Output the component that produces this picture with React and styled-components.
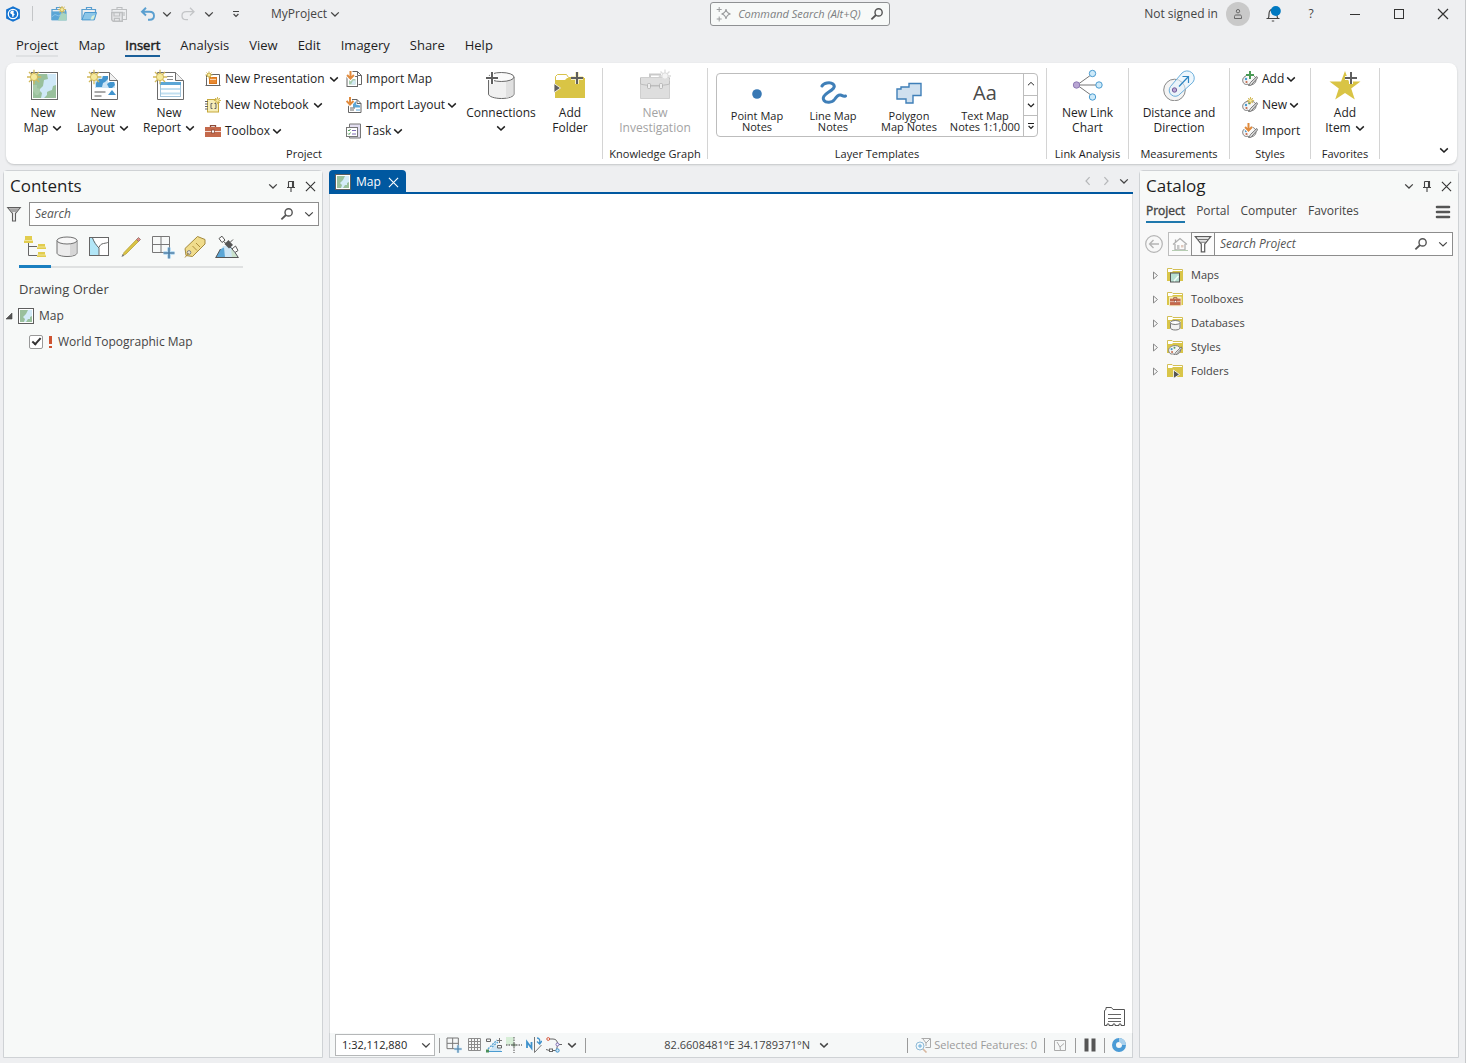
import React from 'react';
import styled, { createGlobalStyle } from 'styled-components';

const GlobalStyle = createGlobalStyle`
  *, *::before, *::after { box-sizing: border-box; }
  body {
    margin: 0;
    background: #eeeff1;
    color: #444;
    font: 12px/16px "Open Sans", "Noto Sans", sans-serif;
  }
  button, input, select { font: inherit; color: inherit; }
  button { background: none; border: 0; padding: 0; cursor: pointer; }
  svg { display: block; flex: none; }
  ul { list-style: none; margin: 0; padding: 0; }
  h2, h3 { margin: 0; font-weight: 400; }
  a { color: inherit; text-decoration: none; }
`;

/* ---------- icons ---------- */

const Glyph = ({ size = 16, box = size, children, ...rest }) => (
  <svg width={size} height={size} viewBox={`0 0 ${box} ${box}`} fill="none" aria-hidden="true" {...rest}>
    {children}
  </svg>
);

const Chevron = ({ size = 10, color = 'currentColor', weight = 1.5, turn = 0 }) => (
  <Glyph size={size} box={10}>
    <path d="M1.2 3.4 5 7 8.8 3.4" stroke={color} strokeWidth={weight} transform={`rotate(${turn} 5 5)`} />
  </Glyph>
);

const BarChevron = ({ size = 10 }) => (
  <Glyph size={size} box={10}>
    <path d="M2 2.5h6M2.6 5 5 7.4 7.4 5" stroke="currentColor" strokeWidth="1.2" />
  </Glyph>
);

const Sun = ({ x, y, r = 3, fill = '#f6ea9c', stroke = '#d2b95a' }) => (
  <g transform={`translate(${x} ${y})`} stroke={stroke}>
    <path
      d={`M0 ${-r * 2}V${r * 2}M${-r * 2} 0H${r * 2}M${-r * 1.4} ${-r * 1.4}L${r * 1.4} ${r * 1.4}M${r * 1.4} ${-r * 1.4}L${-r * 1.4} ${r * 1.4}`}
      strokeWidth={r > 2.5 ? 1.3 : 1}
    />
    <circle r={r} fill={fill} strokeWidth="1" />
  </g>
);

const Plus = ({ x, y, r = 5, color = '#5f5f5f', halo = '#fff', weight = 2 }) => (
  <g>
    <path d={`M${x - r} ${y}h${r * 2}M${x} ${y - r}v${r * 2}`} stroke={halo} strokeWidth={weight + 2} />
    <path d={`M${x - r} ${y}h${r * 2}M${x} ${y - r}v${r * 2}`} stroke={color} strokeWidth={weight} />
  </g>
);

const DownArrow = ({ x, y }) => (
  <g>
    <path d={`M${x} ${y}v7M${x - 3.4} ${y + 4}l3.4 3.6 3.4-3.6`} stroke="#fff" strokeWidth="4" />
    <path d={`M${x} ${y}v7M${x - 3.4} ${y + 4}l3.4 3.6 3.4-3.6`} stroke="#e08a3c" strokeWidth="2" />
  </g>
);

const LogoIcon = () => (
  <Glyph>
    <path d="M8 0.3 14.9 3.6V12.4L8 15.8 1.1 12.4V3.6Z" fill="#1473d0" />
    <circle cx="8" cy="8" r="4.7" stroke="#fff" strokeWidth="1.3" />
    <path d="M8.2 4.4c-2 .2-3.2 1-3 2.8l1.8 1.4.4 2.4c1 .5 1.2-.6 1.3-1.5l1.1-1.2-1.6-1.4.8-1Z" fill="#fff" />
  </Glyph>
);

const CaseIcon = ({ sun }) => (
  <Glyph>
    <path d="M5.500 3.500V1.500h5v2M1 14V3.500h13.500V6" stroke="#5a9fd0" strokeWidth="1.2" />
    {sun ? (
      <>
        <path d="M.6 5.400h15v9H.6Z" fill="#5ba6d6" />
        <path d="M7 14.400 9 9.500l2-3 4.600 1.400v6.500Z" fill="#a9d4c0" />
        <path d="M.6 11 4 8.500l4 1.500 3-3.500" stroke="#8ac3e6" />
        <Sun x={11} y={3.6} r={2} />
      </>
    ) : (
      <>
        <path d="M3.800 6.500h11.700l-2.200 7.400H1Z" fill="#8cc6e8" stroke="#4a99cf" />
        <path d="M9.5 13.4 11 10l3-1-1.6 4.400Z" fill="#d9eed6" />
      </>
    )}
  </Glyph>
);

const SaveIcon = () => (
  <Glyph stroke="#bdbfc1">
    <path d="M6 3.500V1.500h5v2M1 5.500v-2h14.500v10H12" strokeWidth="1.1" />
    <path d="M.7 6.5h10.6v8.8H2.2L.7 13.8Z" fill="#e6e7e9" strokeWidth="1.4" />
    <path d="M3 6.8v3.200h5.600V6.800M3.400 15v-2.600h5V15M13 6v4" strokeWidth="1.200" />
  </Glyph>
);

const UndoIcon = ({ color, flip }) => (
  <Glyph>
    <g transform={flip ? 'matrix(-1 0 0 1 16 0)' : undefined} stroke={color} strokeWidth={flip ? 1.3 : 1.9}>
      <path d="M6 1.8 2 5.7l4 3.8M2.2 5.7h7.3c3 0 4.5 1.6 4.5 4s-1.700 4-4.200 4H8" />
    </g>
  </Glyph>
);

const SparkleIcon = () => (
  <Glyph stroke="#9b9d9f">
    <path d="M10 3.200c.5 3 1.300 4.200 4.500 4.800-3.200.6-4 1.800-4.500 4.800-.5-3-1.300-4.200-4.500-4.800 3.200-.6 4-1.800 4.500-4.800Z" strokeWidth="1.1" />
    <path d="M3.200 1v5M.7 3.500h5M3.200 10.500v5M.7 13h5" />
  </Glyph>
);

const SearchIcon = ({ size = 14 }) => (
  <Glyph size={size} box={14}>
    <circle cx="8.6" cy="5.4" r="3.6" stroke="#555" strokeWidth="1.4" />
    <path d="M6 8 1.4 12.300" stroke="#555" strokeWidth="1.800" />
  </Glyph>
);

const UserIcon = () => (
  <Glyph size={12} box={12}>
    <circle cx="6" cy="3.200" r="1.700" stroke="#666" />
    <path d="M2.500 10.500v-2c0-1 .6-1.500 1.500-1.500h4c.9 0 1.500.5 1.500 1.500v2Z" stroke="#666" />
  </Glyph>
);

const BellIcon = () => (
  <Glyph>
    <path d="M1.500 12.500h13M3.200 12.300c.8-1 .8-2 .8-4.300C4 5 5.300 3.300 8 3.300S12 5 12 8c0 2.300 0 3.300.8 4.300M6.800 15h2.400" stroke="#444" strokeWidth="1.200" />
    <circle cx="10.800" cy="5" r="5" fill="#0079c1" />
  </Glyph>
);

const MinimizeIcon = () => <Glyph size={12} box={12}><path d="M1 6.500h10" stroke="#333" /></Glyph>;
const MaximizeIcon = () => <Glyph size={12} box={12}><rect x="1.500" y="1.500" width="9" height="9" stroke="#333" /></Glyph>;
const CloseIcon = ({ size = 12, color = '#333' }) => (
  <Glyph size={size} box={12}><path d="M1 1 11 11M11 1 1 11" stroke={color} strokeWidth="1.200" /></Glyph>
);
const PinIcon = () => (
  <Glyph size={12} box={12}><path d="M3.500 1.500h5V7M3.500 1.500V7M2 7.500h8M6 7.500V12M7.500 1.500v6" stroke="#444" strokeWidth="1.100" /></Glyph>
);

const MapShapes = () => (
  <>
    <rect x="4.500" y="3.500" width="26" height="27" fill="#fff" stroke="#6a6a6a" />
    <rect x="6" y="5" width="23" height="24" fill="#99c09c" />
    <path d="M20 5h9v11l-3 1-1 4-3 1-2 1v3l-3 3h-3l1-5-3-3 4-4 1-6 4-1Z" fill="#cfe8f7" />
    <path d="M6 16h4v3l3 1v3l-2 3H9l-3-4Z" fill="#a9cbab" />
  </>
);

const NewMapIcon = () => <Glyph size={32}><MapShapes /><Sun x={7} y={8} r={3.6} /></Glyph>;

const PageOutline = () => (
  <>
    <path d="M4.500 3.500h18l8 8v19h-26Z" fill="#fff" stroke="#6a6a6a" />
    <path d="M22.500 3.500v8h8" fill="#f1f1f1" stroke="#6a6a6a" />
  </>
);

const NewLayoutIcon = () => (
  <Glyph size={32}>
    <PageOutline />
    <path d="M8 7h13v6h7v6H8Z" fill="#cbe4f5" />
    <path d="m9 14 3-4h3l1-3h5v3l-3 3-2 1-1 4H9ZM20 15l3-2h4l1 3-3 3h-3Z" fill="#4295cf" />
    <path d="M7.500 23h11M7.500 27h7" stroke="#555" />
    <path d="m25 21 4 5h-8Z" fill="#4295cf" />
    <Sun x={7} y={8} r={3.6} />
  </Glyph>
);

const NewReportIcon = () => (
  <Glyph size={32}>
    <PageOutline />
    <path d="M14 7.500h6M14 10.500h6" stroke="#8a8a8a" />
    <rect x="7.500" y="13.500" width="20" height="14" fill="#fff" stroke="#a3c5dc" />
    <path d="M7 13h21v3H7Z" fill="#5ba6d6" />
    <path d="M8 20h19M8 24.500h19" stroke="#c2dff0" strokeWidth="2" />
    <Sun x={7} y={8} r={3.6} />
  </Glyph>
);

const PresentationIcon = () => (
  <Glyph>
    <path d="M1.500 4v10.500h13v-11H6M.5 14.500h2M13.500 14.500h2" stroke="#666" fill="#fff" />
    <rect x="4.500" y="6.500" width="7" height="6" fill="#e98a32" stroke="#d9771c" />
    <path d="M5 8.500h6" stroke="#f8d3ae" />
    <Sun x={4} y={4} r={1.8} />
  </Glyph>
);

const NotebookIcon = () => (
  <Glyph>
    <rect x="2.500" y="2.500" width="11" height="12.500" fill="#f7eeb6" stroke="#c6a93d" />
    <path d="M0 4.500h3M0 7h3M0 9.500h3M0 12h3" stroke="#666" />
    <path d="M7.500 6.500H6v5h1.500M9.500 6.500H11v5H9.500" stroke="#666" />
    <Sun x={12.500} y={3.500} r={1.8} />
  </Glyph>
);

const ToolboxShapes = () => (
  <>
    <path d="M5.500 4.500V2.600h5v1.900" stroke="#8b4a38" strokeWidth="1.300" />
    <path d="M0 4h16v10H0Z" fill="#c4694b" />
    <path d="M0 8.500h16" stroke="#f5ded6" />
    <rect x="6.500" y="7" width="3" height="3" fill="#fff" stroke="#8b4a38" strokeWidth=".8" />
  </>
);
const ToolboxIcon = () => <Glyph><ToolboxShapes /></Glyph>;

const ImportMapIcon = () => (
  <Glyph>
    <path d="M5.500 3V.5h6l4 4v9h-3" fill="#fff" stroke="#666" />
    <path d="M11.500.5v4h4" stroke="#666" />
    <rect x="1" y="5.500" width="10.500" height="10" fill="#fff" stroke="#666" />
    <path d="M3 8h6.500v5.500H3Z" fill="#a8cdb0" />
    <path d="m5 13.500 2-4h2.500v4Z" fill="#d3e9f5" />
    <DownArrow x={4.5} y={0} />
  </Glyph>
);

const ImportLayoutIcon = () => (
  <Glyph>
    <path d="M2.500 2.500H11l4 4v9H2.500Z" fill="#fff" stroke="#666" />
    <path d="M11 2.500v4h4" stroke="#666" />
    <path d="m7 5.500 3-1v3l4 1v2H7Z" fill="#5ba6d6" />
    <path d="M4 11h5M4 13h4" stroke="#666" />
    <path d="M10 13h4" stroke="#5ba6d6" />
    <DownArrow x={4} y={0} />
  </Glyph>
);

const TaskIcon = () => (
  <Glyph>
    <path d="M3.500 1h11v14h-11Z" fill="#e2def0" stroke="#777" />
    <rect x=".5" y="4.500" width="11" height="9" fill="#fff" stroke="#777" />
    <path d="m2 7 1 1 1.500-2M2 10.500l1 1 1.500-2" stroke="#4e9a55" />
    <path d="M6 7.500h4M6 11h4" stroke="#7d6bb5" />
  </Glyph>
);

const ConnectionsIcon = () => (
  <Glyph size={32}>
    <path d="M3.500 8v17c0 2.500 6 4.500 13 4.500s12.500-2 12.500-4.500V8" fill="#f0f0f0" stroke="#6a6a6a" />
    <path d="M21 11.500c3-.4 6-1.200 7.500-2.200V25.500c-2 2-5 3-7.500 3.300Z" fill="#e0e0e0" />
    <ellipse cx="16.300" cy="8" rx="12.700" ry="4.500" fill="#fafafa" stroke="#6a6a6a" />
    <Plus x={7} y={9} r={6} />
  </Glyph>
);

const AddFolderIcon = () => (
  <Glyph size={32}>
    <path d="M1.500 28V7.500l2-2h9l2 3H30" stroke="#d8c24a" fill="#fff" />
    <path d="M1 29V11h10l2-2h18v20Z" fill="#d9c445" />
    <path d="M0 14.500 6.500 19 0 23.500Z" fill="#5f5f5f" stroke="#fff" strokeWidth=".8" />
    <Plus x={23} y={9} r={6} halo="#f6efc2" />
  </Glyph>
);

const InvestigationIcon = () => (
  <Glyph size={32}>
    <path d="M11 8V5.500h10V8" stroke="#c9c9c9" strokeWidth="2" />
    <path d="M1.500 8.500h29v21h-29Z" fill="#dedede" stroke="#cfcfcf" />
    <path d="M1.500 9v6c5 2 24 2 29 0V9M9 17h14" stroke="#bdbdbd" />
    <rect x="8.500" y="14.500" width="3" height="5" rx="1" fill="#eee" stroke="#b5b5b5" />
    <rect x="20.500" y="14.500" width="3" height="5" rx="1" fill="#eee" stroke="#b5b5b5" />
    <Sun x={26} y={7} r={3.2} fill="#f4f4f4" stroke="#dcdcdc" />
  </Glyph>
);

const PointNoteIcon = () => <Glyph size={28}><circle cx="14" cy="16" r="4.800" fill="#3878b4" /></Glyph>;
const LineNoteIcon = () => (
  <Glyph size={28}>
    <path d="M3 8C4.500 5 11 3.500 14 6c3.500 3-1 6-5 8.500-3.500 2.300-6 5-4 8 2 2.700 8 2.500 10.500-1 1.800-2.800 3.500-5 6-4.500 2 .4 2.500 1.800 5 1" stroke="#3f7fb8" strokeWidth="3" strokeLinecap="round" />
  </Glyph>
);
const PolygonNoteIcon = () => (
  <Glyph size={28}>
    <path d="M14 5.500h12v12h-8v7.500h-7v-4H2v-10h4v-2h8Z" fill="#cfe0ef" stroke="#3f7fb8" strokeWidth="1.400" />
  </Glyph>
);

const LinkChartIcon = () => (
  <Glyph size={32}>
    <path d="M5 16 21 4.500M5 16h22M5 16l16 11.500" stroke="#777" />
    <g stroke="#4a9bd0" fill="#cdeafa">
      <circle cx="20.500" cy="4.500" r="3.200" /><circle cx="27" cy="16" r="3.200" /><circle cx="20.500" cy="28" r="3.200" />
    </g>
    <circle cx="4.500" cy="16" r="3.200" fill="#b9a6d3" stroke="#8e7ab5" />
  </Glyph>
);

const DistanceIcon = () => (
  <Glyph size={32}>
    <circle cx="11.500" cy="21" r="10.800" fill="#f4f4f4" stroke="#8a8a8a" />
    <path d="M7.500 17.500 19 4a7.200 7.200 0 0 1 11 9.200L17 25a5.800 5.800 0 1 1-9.500-7.500Z" fill="#e2f2fb" fillOpacity=".6" stroke="#6aaedb" />
    <path d="M16 17.500 25 8M19.500 7.500h6V14" stroke="#2f86c3" strokeWidth="1.200" />
    <circle cx="11.500" cy="21" r="2.200" fill="#b9a6d3" stroke="#6f5a98" />
  </Glyph>
);

const PaletteShapes = () => (
  <>
    <path d="M8 4C4 4 .7 6.300.7 9.200S3 14 5 13.300c1.500-.5 1.500.8 3 .7 3 0 6-2 6-5S12 4 8 4Z" fill="#f5f5f5" stroke="#777" />
    <circle cx="4" cy="8" r="1.200" fill="#4a9bd0" /><circle cx="7.200" cy="6.300" r="1.100" fill="#5a9b62" /><circle cx="4.500" cy="11" r="1.100" fill="#c4694b" />
    <path d="M14.800 5.500 8.500 11.500c-.5.800-1 2-2 3 1.500.2 3-.3 3.500-1.500l5.500-6Z" fill="#e3e3e3" stroke="#666" strokeWidth=".9" />
  </>
);
const StyleAddIcon = () => <Glyph><PaletteShapes /><Plus x={8} y={4} r={4} color="#4a9a56" /></Glyph>;
const StyleNewIcon = () => <Glyph><PaletteShapes /><Sun x={8.5} y={3.6} r={1.8} /></Glyph>;
const StyleImportIcon = () => <Glyph><PaletteShapes /><DownArrow x={6.5} y={0} /></Glyph>;

const StarIcon = () => (
  <Glyph size={32}>
    <path d="m16 2 3.800 10.500h11.700l-9.300 7 3.600 11L16 24 6.200 30.500 9.800 19.500.5 12.500H12Z" fill="#d9c445" />
    <Plus x={22} y={9} r={6} />
  </Glyph>
);

const FilterIcon = ({ filled = true }) => (
  <Glyph size={filled ? 16 : 18} box={16}>
    <path d={filled ? 'M1.700 1.500h12.600L9.500 7.500V15h-3V7.500Z' : 'M1.200 1.500h13.600L9.500 8v7h-3V8Z'} fill={filled ? '#eee' : '#fff'} stroke="#5e5e5e" strokeWidth="1.100" />
    <path d="M2.800 2.300h10.400L10.300 6H5.700Z" fill={filled ? '#a5a5a5' : '#e2e2e2'} />
    {!filled && <path d="M3 4h10M5 6.500h6" stroke="#777" strokeWidth=".9" />}
  </Glyph>
);

const DrawingOrderIcon = () => (
  <Glyph size={24}>
    <path d="M5.500 8v12.500H14M5.500 11.500H14" stroke="#666" />
    <path d="M2 1h7v3.500l1 1V8H1V5.500l1-1ZM15 9h7v2.500l1 1V14h-9v-1.500l1-1ZM15 17h7v2.500l1 1V22h-9v-1.500l1-1Z" fill="#e2cd4e" />
    <path d="M1 5.500h9M14 12h9M14 20h9" stroke="#f5ecb0" strokeWidth=".8" />
  </Glyph>
);
const CylinderIcon = () => (
  <Glyph size={24}>
    <path d="M2 5.500v12.500c0 2 4.500 3.500 10 3.500S22 20 22 18V5.500" fill="#ececec" stroke="#707070" />
    <path d="M15 9c3-.3 5-1 6.500-2v11c-1 1.500-3.500 2.500-6.500 2.800Z" fill="#d6d6d6" />
    <ellipse cx="12" cy="5.500" rx="10" ry="3.500" fill="#f8f8f8" stroke="#707070" />
  </Glyph>
);
const SelectionIcon = () => (
  <Glyph size={24}>
    <rect x="2.500" y="2.500" width="19" height="18" fill="#fff" stroke="#666" />
    <path d="M3 3h3l3 6 3 4v7H3Z" fill="#b2e6f7" />
    <path d="M5.500 3c1.500 4 3.500 7 6.500 10v7.500M12 12.500c1-2.500 2-3.500 4.500-4s3.500-.5 5-1.500" stroke="#666" />
  </Glyph>
);
const PencilIcon = () => (
  <Glyph size={24}>
    <path d="m4 20.500 1-3L17.500 4.500l2 2L7 19Z" fill="#d9c445" stroke="#b29a30" strokeWidth=".7" />
    <path d="m17.500 4.500 2-2 2 2-2 2Z" fill="#dd8d86" stroke="#8b6d68" strokeWidth=".8" />
    <path d="m2.500 22 1-3 1.800 1.800Z" fill="#777" />
  </Glyph>
);
const SnapGridIcon = ({ size = 24 }) => (
  <Glyph size={size} box={24}>
    <path d="M1.500 1.500h17v16h-17ZM10 1.500v16M1.500 9.500h17" stroke="#777" strokeWidth={size < 20 ? 1.5 : 1} />
    <path d="M12.500 18h11M18 12.500v11" stroke="#bfe0f5" strokeWidth="4" />
    <path d="M12.500 18h11M18 12.500v11" stroke="#4d7ea5" strokeWidth="1.600" />
  </Glyph>
);
const TagIcon = () => (
  <Glyph size={24}>
    <path d="M14.500 1.500 22 4.500V9L9.500 21.500l-6.500-1L2 13.500Z" fill="#f0dc8c" stroke="#a38a3c" />
    <circle cx="6" cy="17.500" r="1.800" fill="#fff" stroke="#777" />
    <path d="m9.500 11 4.500 4.500M13 8l4 4M2 22.500l4-5" stroke="#b08f3b" />
  </Glyph>
);
const SatelliteIcon = () => (
  <Glyph size={24}>
    <path d="M8 11h8l7.500 11.500H.5Z" fill="#cfe6f5" />
    <path d="m5 14.500 4-2 1 10H.8Z" fill="#5ba6d6" /><path d="m16 13 7 9.500h-6Z" fill="#cbe3cc" />
    <path d="M.5 22.500h23M5.500 14 .8 22.500M20 17.500l3.300 5" stroke="#555" />
    <path d="m9.500 9 4.500 4.500 4-3.500-4.500-5Z" fill="#555" />
    <path d="m4 3.500 3-2.300 3 4-3 2.300ZM17 14l3.500-3 2.500 4.500-3 2ZM8.500 6.500l2.500 2M15 12l3 2.500M15.500 7l2.500-2.500" stroke="#555" fill="#fff" />
  </Glyph>
);

const SmallMapIcon = () => (
  <Glyph>
    <rect x=".5" y=".5" width="15" height="15" fill="#fff" stroke="#5e5e5e" />
    <rect x="2" y="2" width="12" height="12" fill="#99c09c" />
    <path d="M10 2h4v6l-2 1v2h-2l-2 3H6l1-3-2-2 3-3Z" fill="#d3ebf8" />
  </Glyph>
);

const FolderIcon = ({ kind }) => (
  <Glyph>
    <path d="M.5 5V1.500h4.500L6 2.500h9.500V5" stroke="#d3bf55" fill="#fff" />
    <path d="M0 5h5l1-1h10v10H0Z" fill="#d9c549" />
    {kind === 'map' && <><rect x="3.500" y="6" width="9" height="9" fill="#b8e0d2" stroke="#555" /><path d="m7 14 4.500-5" stroke="#f0fbf6" strokeWidth="1.500" /></>}
    {kind === 'toolbox' && <g transform="translate(3 5) scale(.66)"><rect x="-1.500" y="1" width="19" height="14.500" fill="#f6eec0" /><ToolboxShapes /></g>}
    {kind === 'database' && <><path d="M3 6h10.500v8H3Z" fill="#fff" /><path d="M3.500 7.500v5.500c0 1 2 2 4.700 2s4.800-1 4.800-2V7.500" fill="#f2f2f2" stroke="#777" /><ellipse cx="8.200" cy="7.500" rx="4.800" ry="2" fill="#fff" stroke="#777" /></>}
    {kind === 'style' && <g transform="translate(1 3) scale(.9)"><PaletteShapes /></g>}
    {kind === 'folder' && <path d="m6.500 7 6 4.500-6 4Z" fill="#555" stroke="#fff" strokeWidth=".8" />}
  </Glyph>
);

const MenuIcon = () => <Glyph><path d="M2 3h12M2 8h12M2 13h12" stroke="#555" strokeWidth="2.600" strokeLinecap="round" /></Glyph>;
const BackIcon = () => (
  <Glyph size={18}><circle cx="9" cy="9" r="8.300" stroke="#b4b4b4" strokeWidth="1.200" /><path d="M14 9H5M8.500 5 4.600 9l3.900 4" stroke="#b4b4b4" strokeWidth="1.400" /></Glyph>
);
const HomeIcon = () => (
  <Glyph><path d="M1 8.500 8 2.500l7 6M3 8v6h10V8M3.500 6V3.500" stroke="#b0b0b0" strokeWidth="1.300" /><path d="M5 9h2.500v5H5Z" fill="#c6c6c6" /><path d="M9 9h2.500v2.500H9Z" fill="#dfc9bd" /><path d="M0 14.500h16" stroke="#b6cdb2" /></Glyph>
);
const ExpandIcon = () => <Glyph size={9} box={9}><path d="m2.500 1 4 3.500-4 3.500Z" stroke="#8a8a8a" /></Glyph>;
const CollapseIcon = () => <Glyph size={8} box={8}><path d="M7 1v6H1Z" fill="#555" stroke="#444" strokeWidth=".6" /></Glyph>;

const GridIcon = () => <Glyph><path d="M2.500 1.500h12v12h-12ZM5.500 1.500v12M8.500 1.500v12M11.500 1.500v12M2.500 4.500h12M2.500 7.500h12M2.500 10.500h12" stroke="#8c8c8c" /></Glyph>;
const DynamicIcon = () => (
  <Glyph><path d="M3 13.500 9 8l6 4v2.500H3Z" fill="#cfe6f5" /><path d="M.5 2h4v2.500h-4ZM11.500 8.500h4V11h-4Z" stroke="#666" /><path d="M2 12 11 3M6 10l6-5" stroke="#5ba6d6" strokeDasharray="2 1" strokeWidth="1.400" /><path d="M11 3.500h5M13.500 1v5" stroke="#777" /><path d="M2 14.500h14" stroke="#4a9bd0" /><rect x="0" y="12.500" width="3" height="3" fill="#4a8f5a" /></Glyph>
);
const CrossIcon = () => (
  <Glyph><path d="M0 0h8v8H0Z" fill="#d7eed7" /><path d="M8 0v16M0 8h16" stroke="#777" strokeDasharray="1.500 1" strokeWidth="1.300" /><circle cx="8" cy="8" r="1.800" fill="#6a7a6a" /></Glyph>
);
const NorthIcon = () => (
  <Glyph><path d="M1 11V5l4.500 6V5" stroke="#3f92cc" strokeWidth="1.800" /><path d="M8.500 0v15.500l7-7.500" stroke="#777" /><path d="M11 1c2.500 0 3 2 2.800 5M11 4.500 13.700 7 16 4" stroke="#3f92cc" strokeWidth="1.300" /></Glyph>
);
const RouteIcon = () => (
  <Glyph><path d="M2.500 2H7c3 0 4.500 2 4.500 5S10 13 11 13.500M13 7.500h3M0 12.500l3.500 1h8" stroke="#666" /><circle cx="2.200" cy="2" r="1.400" fill="#fff" stroke="#d4573b" /><circle cx="11.500" cy="7.500" r="1.500" fill="#fff" stroke="#7d6bb5" /><circle cx="11.500" cy="13.500" r="1.700" fill="#cfe6f5" stroke="#3f92cc" /><rect x="3.500" y="12" width="3" height="2.500" fill="#fff" stroke="#666" /></Glyph>
);
const ZoomSelIcon = () => (
  <Glyph><path d="M6.500 1.500h9v9h-5M8 2l3 4 4-4M11 6v3" stroke="#aaa" /><circle cx="5" cy="9" r="4" fill="#f1f8fc" stroke="#8fbad6" /><path d="M3 9h4M5 7v4" stroke="#6aaedb" /><path d="m8 12 3.500 3.500" stroke="#d8b8a0" strokeWidth="1.600" /></Glyph>
);
const ExtentIcon = () => <Glyph size={14}><path d="M1.500 2.500h11v10h-11ZM4 4l3 5L11 5.500M7 9l.5 3.500" stroke="#aaa" /></Glyph>;
const PauseIcon = () => <Glyph size={14}><path d="M1.500.5h4v13h-4ZM8.500.5h4v13h-4Z" fill="#555" /></Glyph>;
const RefreshIcon = () => <Glyph size={14}><circle cx="7" cy="7" r="5" stroke="#4a9bd6" strokeWidth="4" /><path d="M7 2a5 5 0 0 1 5 5" stroke="#a9d0ec" strokeWidth="4" /></Glyph>;
const NotesIcon = () => (
  <Glyph size={22}><path d="M1.500 19.500v-15l1.500-1V1.500h5.500l1.500 2h11.500v16H18v-1.500h-2v1.500h-4v-1.500h-2v1.500H6v-1.500H4v1.500Z" fill="#fff" stroke="#555" /><path d="M5 8.500h13M5 12.500h13M5 15.500h13" stroke="#666" /></Glyph>
);

/* ---------- window frame ---------- */

const Window = styled.div`
  min-height: 100vh;
  display: flex;
  flex-direction: column;
  padding-bottom: 5px;
  border-right: 1px solid #c6c8ca;
`;

const TitleBar = styled.header`
  display: grid;
  grid-template-columns: 21fr 180px 17fr;
  align-items: center;
  height: 27px;
`;

const Cluster = styled.div`
  display: flex;
  align-items: center;
  gap: ${p => p.$gap || 0}px;
  padding: 0 ${p => p.$right || 0}px 0 ${p => p.$left || 0}px;
  justify-content: ${p => (p.$end ? 'flex-end' : 'flex-start')};
`;

const ToolButton = styled.button`
  display: flex;
  align-items: center;
  justify-content: center;
  flex: none;
  gap: 3px;
  width: ${p => (p.$w ? `${p.$w}px` : 'auto')};
  height: ${p => p.$h || 24}px;
  white-space: nowrap;
`;

const Rule = styled.span`
  flex: none;
  width: 1px;
  height: 15px;
  background: ${p => p.$tone || '#9a9a9a'};
`;

const CommandSearch = styled.label`
  display: flex;
  align-items: center;
  gap: 6px;
  height: 24px;
  padding: 0 5px;
  border: 1px solid #8f9193;
  border-radius: 3px;
  background: #f7f9f8;
`;

const BareInput = styled.input`
  flex: 1;
  min-width: 0;
  width: 0;
  padding: 0;
  border: 0;
  outline: 0;
  background: transparent;
  font-size: ${p => p.$size || 12}px;
  font-style: italic;
  &::placeholder { color: ${p => p.$tone || '#555'}; opacity: 1; }
`;

const Avatar = styled.button`
  display: grid;
  place-items: center;
  width: 24px;
  height: 24px;
  margin: 0 7px 0 8px;
  border-radius: 50%;
  background: #c9c9c9;
`;

/* ---------- ribbon ---------- */

const TabStrip = styled.nav`
  display: flex;
  gap: 20px;
  height: 36px;
  padding: 9px 16px 0;
  font-size: 13px;
`;

const RibbonTab = styled.a`
  height: 21px;
  line-height: 19px;
  color: #1e1e1e;
  border-bottom: 2px solid ${p => (p.$active ? '#1a5f99' : p.$soft ? '#dfe1e3' : 'transparent')};
  -webkit-text-stroke: ${p => (p.$active ? '0.5px #1e1e1e' : '0')};
`;

const Ribbon = styled.section`
  display: flex;
  height: 101px;
  margin: 0 8px 0 6px;
  padding: 5px 0;
  border-radius: 8px;
  background: #fff;
  box-shadow: 0 1px 2px #c3c5c7;
  color: #1e1e1e;
`;

const Group = styled.div`
  display: flex;
  flex-direction: column;
  justify-content: space-between;
  align-items: center;
  flex: 0 0 ${p => p.$w}px;
  border-right: 1px solid #d4d4d4;
`;

const GroupLabel = styled.span`
  margin-bottom: -2px;
  font-size: 11px;
  line-height: 14px;
  white-space: nowrap;
`;

const GroupBody = styled.div`
  display: flex;
  align-self: stretch;
  justify-content: ${p => (p.$start ? 'flex-start' : 'center')};
  padding-left: ${p => (p.$start ? 8 : 0)}px;
`;

const BigButton = styled.button`
  display: flex;
  flex-direction: column;
  align-items: center;
  width: ${p => p.$w}px;
  height: 74px;
  padding-top: 1px;
  line-height: 15px;
  color: ${p => (p.disabled ? '#a3a3a3' : 'inherit')};
`;

const BigText = styled.span`
  display: flex;
  align-items: center;
  justify-content: center;
  gap: 4px;
  min-height: 15px;
  white-space: nowrap;
  &:first-of-type { margin-top: 4px; }
`;

const SmallStack = styled.div`
  display: flex;
  flex-direction: column;
  align-items: flex-start;
  width: ${p => p.$w}px;
  padding-left: 1px;
  margin-top: -2px;
`;

const SmallButton = styled.button`
  display: flex;
  align-items: center;
  gap: 4px;
  height: 26px;
  white-space: nowrap;
`;

const SmallChevron = styled.span`
  padding-left: ${p => (p.$wide ? 2 : 0)}px;
  margin-left: -2px;
`;

const Gallery = styled.div`
  display: flex;
  width: 322px;
  height: 64px;
  margin-top: 5px;
  padding-left: 2px;
  border: 1px solid #bdbdbd;
  border-radius: 4px;
`;

const GalleryItem = styled.button`
  display: flex;
  flex-direction: column;
  align-items: center;
  justify-content: flex-end;
  width: 76px;
  padding-bottom: 4px;
  font-size: 11px;
  line-height: 11px;
  white-space: pre;
`;

const GallerySample = styled.span`
  display: grid;
  place-items: center;
  height: 28px;
  margin-bottom: 4px;
  font-size: 20px;
  color: #4a4a4a;
`;

const GalleryScroll = styled.div`
  display: grid;
  grid-template-rows: repeat(3, 1fr);
  width: 14px;
  border-left: 1px solid #bdbdbd;
  button { display: grid; place-items: center; }
  button + button { border-top: 1px solid #bdbdbd; }
`;

const RibbonCollapse = styled.button`
  align-self: flex-end;
  margin-left: auto;
  padding: 4px 8px;
`;

/* ---------- docked panes ---------- */

const Workspace = styled.main`
  flex: 1;
  display: grid;
  grid-template-columns: 320px minmax(0, 1fr) 320px;
  gap: 6px;
  padding: 6px 6px 0 3px;
`;

const Pane = styled.section`
  display: flex;
  flex-direction: column;
  border: 1px solid #cfd2d5;
  border-radius: 4px 4px 0 0;
  background: ${p => p.$tone};
`;

const PaneHeader = styled.div`
  display: flex;
  align-items: center;
  height: 30px;
  padding: 0 2px 0 6px;
  background: #f7f9f8;
  h2 { flex: 1; font-size: 17px; line-height: 24px; color: #1e1e1e; }
`;

const ContentsSearch = styled.div`
  display: flex;
  align-items: center;
  gap: 7px;
  margin-top: 1px;
  padding: 0 3px 0 2px;
`;

const SearchBox = styled.label`
  display: flex;
  align-items: center;
  flex: 1;
  gap: 6px;
  height: 24px;
  padding-left: 5px;
  border: 1px solid #8d8d8d;
  background: #fff;
`;

const ViewTabs = styled.div`
  display: flex;
  align-self: flex-start;
  margin: 9px 0 0 15px;
  border-bottom: 2px solid #dfe1e1;
`;

const ViewTab = styled.button`
  display: flex;
  justify-content: center;
  width: 32px;
  height: 33px;
  margin-bottom: -2px;
  border-bottom: 3px solid ${p => (p.$active ? '#1a7fc0' : 'transparent')};
`;

const OrderHeading = styled.h3`
  margin: 12px 0 5px 15px;
  font-size: 13px;
  line-height: 18px;
`;

const LayerRow = styled.div`
  display: flex;
  align-items: center;
  gap: ${p => p.$gap}px;
  height: 26px;
  padding-left: ${p => p.$indent}px;
`;

const LayerLabel = styled.label`
  display: flex;
  align-items: center;
  gap: 6px;
`;

const LayerCheck = styled.input`
  appearance: none;
  display: grid;
  place-items: center;
  width: 14px;
  height: 14px;
  margin: 0;
  border: 1px solid #999;
  border-radius: 2px;
  background: #fff;
  &:checked::after {
    content: '';
    width: 5px;
    height: 9px;
    margin-bottom: 3px;
    border: solid #333;
    border-width: 0 2px 2px 0;
    transform: rotate(42deg);
  }
`;

const Warning = styled.span`
  display: grid;
  gap: 2px;
  &::before { content: ''; width: 3px; height: 8px; background: #cd5331; }
  &::after { content: ''; width: 3px; height: 2px; background: #cd5331; }
`;

const CatalogTabs = styled.nav`
  display: flex;
  align-items: center;
  gap: 11px;
  padding: 0 7px 0 6px;
  height: 22px;
`;

const CatalogTab = styled.a`
  height: 22px;
  line-height: 19px;
  border-bottom: 2px solid ${p => (p.$active ? '#1f78ad' : 'transparent')};
  -webkit-text-stroke: ${p => (p.$active ? '0.4px #444' : '0')};
`;

const MenuButton = styled.button`
  margin-left: auto;
`;

const CatalogSearch = styled.div`
  display: flex;
  align-items: center;
  gap: 5px;
  margin-top: 9px;
  padding: 0 5px;
`;

const SearchGroup = styled.div`
  display: flex;
  flex: 1;
`;

const BoxButton = styled.button`
  display: grid;
  place-items: center;
  width: 24px;
  height: 24px;
  margin-right: -1px;
  border: 1px solid ${p => (p.$faint ? '#bdbdbd' : '#8d8d8d')};
  background: #fbfbfb;
`;

const Tree = styled.ul`
  padding: 7px 0 0 11px;
  font-size: 11px;
`;

const TreeItem = styled.button`
  display: flex;
  align-items: center;
  gap: 7px;
  height: 24px;
`;

const TreeLabel = styled.span`
  padding-left: 1px;
`;

/* ---------- map view ---------- */

const MapPane = styled.section`
  display: flex;
  flex-direction: column;
`;

const DocTabs = styled.div`
  display: flex;
  align-items: center;
  justify-content: space-between;
  height: 24px;
  border-bottom: 2px solid #0058a0;
`;

const DocTab = styled.div`
  display: flex;
  align-items: center;
  gap: 5px;
  height: 22px;
  padding: 2px 4px 0 6px;
  border-radius: 4px 4px 0 0;
  background: #0058a0;
  color: #fff;
`;

const Canvas = styled.div`
  flex: 1;
  display: flex;
  align-items: flex-end;
  justify-content: flex-end;
  padding: 4px 7px;
  border: solid #dcdedf;
  border-width: 0 1px;
  background: #fff;
`;

const StatusBar = styled.footer`
  display: flex;
  align-items: center;
  justify-content: space-between;
  height: 25px;
  padding: 0 6px 0 5px;
  border: solid #cfd2d5;
  border-width: 0 1px 1px;
  background: #f6f8f8;
  font-size: 11px;
`;

const ScaleField = styled.label`
  position: relative;
  display: flex;
  align-items: center;
  width: 100px;
  height: 22px;
  svg { position: absolute; right: 4px; pointer-events: none; }
`;

const ScaleSelect = styled.select`
  appearance: none;
  width: 100%;
  height: 22px;
  padding: 0 6px;
  border: 1px solid #b5b7b8;
  background: #fff;
  color: #1e1e1e;
`;

const Muted = styled.span`
  color: #9b9b9b;
`;

/* ---------- composition ---------- */

const Big = ({ w, icon, lines, menu, disabled }) => (
  <BigButton $w={w} disabled={disabled}>
    {icon}
    {lines.map((line, i) => (
      <BigText key={i}>
        {line}
        {menu && i === lines.length - 1 && <Chevron />}
      </BigText>
    ))}
  </BigButton>
);

const Small = ({ icon, text, menu, wide }) => (
  <SmallButton>
    {icon}
    {text}
    {menu && <SmallChevron $wide={wide}><Chevron /></SmallChevron>}
  </SmallButton>
);

const PaneTools = ({ name }) => (
  <>
    <ToolButton $w={18} aria-label={`${name} options`}><Chevron weight={1.3} /></ToolButton>
    <ToolButton $w={18} aria-label={`Pin ${name}`}><PinIcon /></ToolButton>
    <ToolButton $w={20} aria-label={`Close ${name}`}><CloseIcon size={11} /></ToolButton>
  </>
);

const menuTabs = ['Project', 'Map', 'Insert', 'Analysis', 'View', 'Edit', 'Imagery', 'Share', 'Help'];

const viewTabs = [
  ['Drawing order', DrawingOrderIcon], ['Data source', CylinderIcon], ['Selection', SelectionIcon],
  ['Editing', PencilIcon], ['Snapping', SnapGridIcon], ['Labeling', TagIcon], ['Imagery', SatelliteIcon],
];

const noteTemplates = [
  ['Point Map\nNotes', <PointNoteIcon />],
  ['Line Map\nNotes', <LineNoteIcon />],
  ['Polygon\nMap Notes', <PolygonNoteIcon />],
  ['Text Map\nNotes 1:1,000', 'Aa'],
];

const catalogItems = [
  ['Maps', 'map'], ['Toolboxes', 'toolbox'], ['Databases', 'database'], ['Styles', 'style'], ['Folders', 'folder'],
];

const mapTools = [
  ['Snapping', <SnapGridIcon size={16} />], ['Grid', <GridIcon />], ['Dynamic constraints', <DynamicIcon />],
  ['Ground to grid', <CrossIcon />], ['North offset', <NorthIcon />], ['Trace', <RouteIcon />],
];

export default function App() {
  return (
    <Window>
      <GlobalStyle />
      <TitleBar>
        <Cluster $left={5}>
          <LogoIcon />
          <Cluster $left={11} $right={11}><Rule $tone="#c4c6c8" /></Cluster>
          <ToolButton $w={30} aria-label="New project"><CaseIcon sun /></ToolButton>
          <ToolButton $w={30} aria-label="Open project"><CaseIcon /></ToolButton>
          <ToolButton $w={30} aria-label="Save project"><SaveIcon /></ToolButton>
          <ToolButton $w={28} aria-label="Undo"><UndoIcon color="#5a9fd0" /></ToolButton>
          <ToolButton $w={10} aria-label="Undo history"><Chevron weight={1.3} /></ToolButton>
          <ToolButton $w={32} aria-label="Redo"><UndoIcon color="#c3c5c7" flip /></ToolButton>
          <ToolButton $w={10} aria-label="Redo history"><Chevron weight={1.3} /></ToolButton>
          <ToolButton $w={44} aria-label="Customize toolbar"><BarChevron /></ToolButton>
          <Cluster $left={13}><ToolButton $h={26}>MyProject<Chevron weight={1.3} /></ToolButton></Cluster>
        </Cluster>
        <CommandSearch>
          <SparkleIcon />
          <BareInput $size={11} $tone="#7c7e80" aria-label="Command Search" placeholder="Command Search (Alt+Q)" />
          <SearchIcon />
        </CommandSearch>
        <Cluster $end>
          Not signed in
          <Avatar aria-label="Account"><UserIcon /></Avatar>
          <ToolButton $w={32} aria-label="Notifications"><BellIcon /></ToolButton>
          <ToolButton $w={44} aria-label="Help">?</ToolButton>
          <ToolButton $w={44} aria-label="Minimize"><MinimizeIcon /></ToolButton>
          <ToolButton $w={44} aria-label="Maximize"><MaximizeIcon /></ToolButton>
          <ToolButton $w={44} aria-label="Close"><CloseIcon /></ToolButton>
        </Cluster>
      </TitleBar>

      <TabStrip>
        {menuTabs.map(name => (
          <RibbonTab key={name} href="#" $active={name === 'Insert'} $soft={name === 'Project'}>{name}</RibbonTab>
        ))}
      </TabStrip>

      <Ribbon>
        <Group $w={597}>
          <GroupBody $start>
            <Big w={58} icon={<NewMapIcon />} lines={['New', 'Map']} menu />
            <Big w={62} icon={<NewLayoutIcon />} lines={['New', 'Layout']} menu />
            <Big w={70} icon={<NewReportIcon />} lines={['New', 'Report']} menu />
            <SmallStack $w={141}>
              <Small icon={<PresentationIcon />} text="New Presentation" menu wide />
              <Small icon={<NotebookIcon />} text="New Notebook" menu wide />
              <Small icon={<ToolboxIcon />} text="Toolbox" menu />
            </SmallStack>
            <SmallStack $w={114}>
              <Small icon={<ImportMapIcon />} text="Import Map" />
              <Small icon={<ImportLayoutIcon />} text="Import Layout" menu />
              <Small icon={<TaskIcon />} text="Task" menu />
            </SmallStack>
            <Big w={84} icon={<ConnectionsIcon />} lines={['Connections', '']} menu />
            <Big w={54} icon={<AddFolderIcon />} lines={['Add', 'Folder']} />
          </GroupBody>
          <GroupLabel>Project</GroupLabel>
        </Group>
        <Group $w={105}>
          <GroupBody><Big w={84} icon={<InvestigationIcon />} lines={['New', 'Investigation']} disabled /></GroupBody>
          <GroupLabel>Knowledge Graph</GroupLabel>
        </Group>
        <Group $w={339}>
          <GroupBody>
            <Gallery>
              {noteTemplates.map(([text, sample]) => (
                <GalleryItem key={text}><GallerySample>{sample}</GallerySample>{text}</GalleryItem>
              ))}
              <GalleryScroll>
                <button aria-label="Previous templates"><Chevron size={8} turn={180} weight={1.2} /></button>
                <button aria-label="Next templates"><Chevron size={8} /></button>
                <button aria-label="All templates"><BarChevron /></button>
              </GalleryScroll>
            </Gallery>
          </GroupBody>
          <GroupLabel>Layer Templates</GroupLabel>
        </Group>
        <Group $w={82}>
          <GroupBody><Big w={70} icon={<LinkChartIcon />} lines={['New Link', 'Chart']} /></GroupBody>
          <GroupLabel>Link Analysis</GroupLabel>
        </Group>
        <Group $w={101}>
          <GroupBody><Big w={84} icon={<DistanceIcon />} lines={['Distance and', 'Direction']} /></GroupBody>
          <GroupLabel>Measurements</GroupLabel>
        </Group>
        <Group $w={81}>
          <GroupBody>
            <SmallStack $w={58}>
              <Small icon={<StyleAddIcon />} text="Add" menu />
              <Small icon={<StyleNewIcon />} text="New" menu />
              <Small icon={<StyleImportIcon />} text="Import" />
            </SmallStack>
          </GroupBody>
          <GroupLabel>Styles</GroupLabel>
        </Group>
        <Group $w={69}>
          <GroupBody><Big w={54} icon={<StarIcon />} lines={['Add', 'Item']} menu /></GroupBody>
          <GroupLabel>Favorites</GroupLabel>
        </Group>
        <RibbonCollapse aria-label="Collapse ribbon"><Chevron /></RibbonCollapse>
      </Ribbon>

      <Workspace>
        <Pane $tone="#f7f9f8">
          <PaneHeader><h2>Contents</h2><PaneTools name="Contents" /></PaneHeader>
          <ContentsSearch>
            <ToolButton $w={16} aria-label="Filter contents"><FilterIcon /></ToolButton>
            <SearchBox>
              <BareInput aria-label="Search contents" placeholder="Search" />
              <SearchIcon />
              <ToolButton $w={18} aria-label="Search options"><Chevron weight={1.2} /></ToolButton>
            </SearchBox>
          </ContentsSearch>
          <ViewTabs>
            {viewTabs.map(([name, Art], i) => (
              <ViewTab key={name} aria-label={name} $active={i === 0}><Art /></ViewTab>
            ))}
          </ViewTabs>
          <OrderHeading>Drawing Order</OrderHeading>
          <LayerRow $gap={5} $indent={1}><CollapseIcon /><SmallMapIcon /><span>Map</span></LayerRow>
          <LayerRow $gap={6} $indent={25}>
            <LayerLabel>
              <LayerCheck type="checkbox" defaultChecked />
              <Warning />
              World Topographic Map
            </LayerLabel>
          </LayerRow>
        </Pane>

        <MapPane>
          <DocTabs>
            <DocTab>
              <SmallMapIcon />
              Map
              <ToolButton $w={16} $h={18} aria-label="Close map"><CloseIcon size={11} color="#fff" /></ToolButton>
            </DocTab>
            <Cluster>
              <ToolButton $w={18} aria-label="Scroll left"><Chevron turn={90} color="#b5b7b9" weight={1.2} /></ToolButton>
              <ToolButton $w={18} aria-label="Scroll right"><Chevron turn={-90} color="#b5b7b9" weight={1.2} /></ToolButton>
              <ToolButton $w={18} aria-label="Open views"><Chevron weight={1.3} /></ToolButton>
            </Cluster>
          </DocTabs>
          <Canvas><ToolButton aria-label="Map notes"><NotesIcon /></ToolButton></Canvas>
          <StatusBar>
            <Cluster>
              <ScaleField>
                <ScaleSelect aria-label="Map scale" defaultValue="a"><option value="a">1:32,112,880</option></ScaleSelect>
                <Chevron weight={1.3} />
              </ScaleField>
              <Cluster $left={4} $right={4}><Rule /></Cluster>
              {mapTools.map(([name, art]) => <ToolButton key={name} $w={20} aria-label={name}>{art}</ToolButton>)}
              <ToolButton $w={16} aria-label="More tools"><Chevron /></ToolButton>
              <Cluster $left={5}><Rule /></Cluster>
            </Cluster>
            <ToolButton><span>82.6608481°E 34.1789371°N</span><Cluster $left={6}><Chevron /></Cluster></ToolButton>
            <Cluster $gap={7}>
              <Rule />
              <ToolButton><ZoomSelIcon /><Muted>Selected Features: 0</Muted></ToolButton>
              <Rule />
              <ToolButton $w={16} aria-label="Selection extent"><ExtentIcon /></ToolButton>
              <Rule />
              <ToolButton $w={14} aria-label="Pause drawing"><PauseIcon /></ToolButton>
              <Rule />
              <ToolButton $w={14} aria-label="Refresh"><RefreshIcon /></ToolButton>
            </Cluster>
          </StatusBar>
        </MapPane>

        <Pane $tone="#f8f8f8">
          <PaneHeader><h2>Catalog</h2><PaneTools name="Catalog" /></PaneHeader>
          <CatalogTabs>
            <CatalogTab href="#" $active>Project</CatalogTab>
            <CatalogTab href="#">Portal</CatalogTab>
            <CatalogTab href="#">Computer</CatalogTab>
            <CatalogTab href="#">Favorites</CatalogTab>
            <MenuButton aria-label="Catalog menu"><MenuIcon /></MenuButton>
          </CatalogTabs>
          <CatalogSearch>
            <ToolButton $w={18} aria-label="Back"><BackIcon /></ToolButton>
            <SearchGroup>
              <BoxButton $faint aria-label="Home"><HomeIcon /></BoxButton>
              <BoxButton aria-label="Filter"><FilterIcon filled={false} /></BoxButton>
              <SearchBox>
                <BareInput aria-label="Search Project" placeholder="Search Project" />
                <SearchIcon />
                <ToolButton $w={18} aria-label="Search options"><Chevron weight={1.2} /></ToolButton>
              </SearchBox>
            </SearchGroup>
          </CatalogSearch>
          <Tree>
            {catalogItems.map(([name, kind]) => (
              <li key={name}><TreeItem><ExpandIcon /><FolderIcon kind={kind} /><TreeLabel>{name}</TreeLabel></TreeItem></li>
            ))}
          </Tree>
        </Pane>
      </Workspace>
    </Window>
  );
}
